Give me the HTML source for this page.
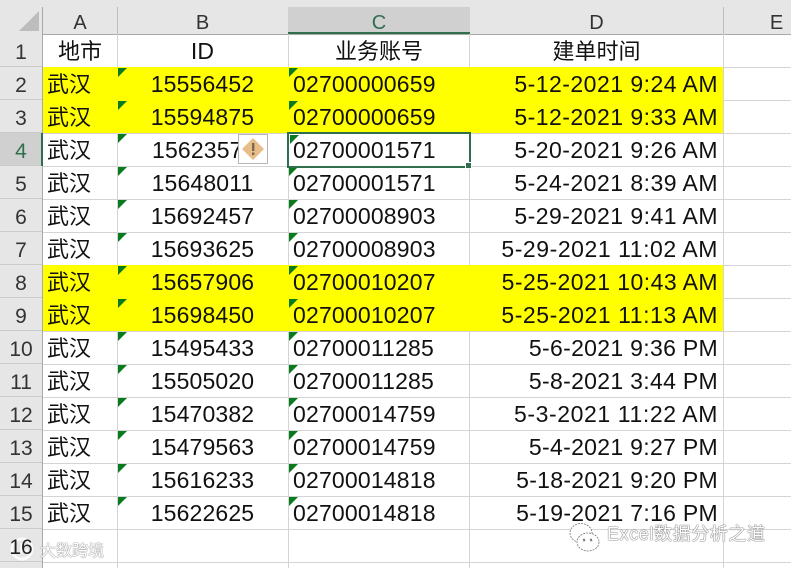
<!DOCTYPE html>
<html><head><meta charset="utf-8">
<style>
html,body{margin:0;padding:0;background:#fff}
#s{position:relative;width:791px;height:568px;overflow:hidden;background:#fff;font-family:"Liberation Sans","Noto Sans CJK SC",sans-serif;color:#111}
#s div{position:absolute;box-sizing:border-box}
.v{top:34px;bottom:0;width:1px;background:#d4d4d4}
.h{left:43px;right:0;height:1px;background:#d4d4d4}
.t{height:33px;line-height:33px;font-size:23px;white-space:nowrap}
.a{left:47px;font-size:22px}
.b{left:117px;width:171px;text-align:center;letter-spacing:.15px}
.c{left:293px;letter-spacing:.18px}
.d{right:73px;text-align:right}
.r{left:0;width:42px;height:33px;line-height:38px;text-align:center;font-size:21px;color:#333;background:#e6e6e6;border-bottom:1px solid #cacaca}
.hd{top:7px;height:27px;line-height:32px;text-align:center;font-size:20px;color:#333}
.tri{width:0;height:0;border-top:9px solid #0a7a1e;border-right:9px solid transparent}
</style></head><body>
<div id="s">
<div style="left:0;top:0;width:791px;height:34px;background:#e6e6e6"></div>
<div style="left:0;top:34px;width:43px;height:534px;background:#e6e6e6"></div>
<div style="left:0;top:34px;width:791px;height:1px;background:#a9a9a9"></div>
<div style="left:42px;top:7px;width:1px;height:561px;background:#a9a9a9"></div>
<svg style="position:absolute;left:0;top:0" width="42" height="34"><polygon points="19,31 39,31 39,11" fill="#bdbdbd"/></svg>
<div style="left:117px;top:7px;width:1px;height:27px;background:#bdbdbd"></div>
<div style="left:723px;top:7px;width:1px;height:27px;background:#bdbdbd"></div>
<div style="left:288px;top:7px;width:182px;height:27px;background:#d0d0d0"></div>
<div style="left:288px;top:32px;width:182px;height:2px;background:#2f6f4d"></div>
<div class="hd" style="left:43px;width:74px">A</div>
<div class="hd" style="left:117px;width:171px">B</div>
<div class="hd" style="left:288px;width:182px;color:#2f6f4d">C</div>
<div class="hd" style="left:470px;width:253px">D</div>
<div class="hd" style="left:724px;width:67px;padding-left:38px;">E</div>

<div class="v" style="left:117px"></div>
<div class="v" style="left:288px"></div>
<div class="v" style="left:469px"></div>
<div class="v" style="left:723px"></div>

<div class="h" style="top:67px"></div>
<div class="h" style="top:100px"></div>
<div class="h" style="top:133px"></div>
<div class="h" style="top:166px"></div>
<div class="h" style="top:199px"></div>
<div class="h" style="top:232px"></div>
<div class="h" style="top:265px"></div>
<div class="h" style="top:298px"></div>
<div class="h" style="top:331px"></div>
<div class="h" style="top:364px"></div>
<div class="h" style="top:397px"></div>
<div class="h" style="top:430px"></div>
<div class="h" style="top:463px"></div>
<div class="h" style="top:496px"></div>
<div class="h" style="top:529px"></div>
<div class="h" style="top:562px"></div>
<div style="left:43px;top:67px;width:680px;height:66px;background:#ff0"></div>
<div style="left:43px;top:265px;width:680px;height:66px;background:#ff0"></div>

<div class="r" style="top:34px">1</div>
<div class="r" style="top:67px">2</div>
<div class="r" style="top:100px">3</div>
<div class="r" style="top:133px;background:#d0d0d0;color:#2f6f4d">4</div>
<div class="r" style="top:166px">5</div>
<div class="r" style="top:199px">6</div>
<div class="r" style="top:232px">7</div>
<div class="r" style="top:265px">8</div>
<div class="r" style="top:298px">9</div>
<div class="r" style="top:331px">10</div>
<div class="r" style="top:364px">11</div>
<div class="r" style="top:397px">12</div>
<div class="r" style="top:430px">13</div>
<div class="r" style="top:463px">14</div>
<div class="r" style="top:496px">15</div>
<div class="r" style="top:529px;color:transparent">16</div>
<div style="left:41px;top:133px;width:2px;height:33px;background:#2f6f4d"></div>

<div class="t" style="left:43px;width:74px;top:35px;text-align:center;font-size:22px">地市</div>
<div class="t b" style="top:35px">ID</div>
<div class="t" style="left:288px;width:182px;top:35px;text-align:center;font-size:22px">业务账号</div>
<div class="t" style="left:470px;width:253px;top:35px;text-align:center;font-size:22px">建单时间</div>

<div class="t a" style="top:68px">武汉</div><div class="t b" style="top:68px">15556452</div><div class="t c" style="top:68px">02700000659</div><div class="t d" style="top:68px;letter-spacing:.47px">5-12-2021 9:24 AM</div>
<div class="t a" style="top:101px">武汉</div><div class="t b" style="top:101px">15594875</div><div class="t c" style="top:101px">02700000659</div><div class="t d" style="top:101px;letter-spacing:.47px">5-12-2021 9:33 AM</div>
<div class="t a" style="top:134px">武汉</div><div class="t b" style="top:134px;left:152px;width:auto">1562357</div><div class="t c" style="top:134px">02700001571</div><div class="t d" style="top:134px;letter-spacing:.47px">5-20-2021 9:26 AM</div>
<div class="t a" style="top:167px">武汉</div><div class="t b" style="top:167px">15648011</div><div class="t c" style="top:167px">02700001571</div><div class="t d" style="top:167px;letter-spacing:.47px">5-24-2021 8:39 AM</div>
<div class="t a" style="top:200px">武汉</div><div class="t b" style="top:200px">15692457</div><div class="t c" style="top:200px">02700008903</div><div class="t d" style="top:200px;letter-spacing:.47px">5-29-2021 9:41 AM</div>
<div class="t a" style="top:233px">武汉</div><div class="t b" style="top:233px">15693625</div><div class="t c" style="top:233px">02700008903</div><div class="t d" style="top:233px;letter-spacing:.55px">5-29-2021 11:02 AM</div>
<div class="t a" style="top:266px">武汉</div><div class="t b" style="top:266px">15657906</div><div class="t c" style="top:266px">02700010207</div><div class="t d" style="top:266px;letter-spacing:.44px">5-25-2021 10:43 AM</div>
<div class="t a" style="top:299px">武汉</div><div class="t b" style="top:299px">15698450</div><div class="t c" style="top:299px">02700010207</div><div class="t d" style="top:299px;letter-spacing:.55px">5-25-2021 11:13 AM</div>
<div class="t a" style="top:332px">武汉</div><div class="t b" style="top:332px">15495433</div><div class="t c" style="top:332px">02700011285</div><div class="t d" style="top:332px;letter-spacing:.31px">5-6-2021 9:36 PM</div>
<div class="t a" style="top:365px">武汉</div><div class="t b" style="top:365px">15505020</div><div class="t c" style="top:365px">02700011285</div><div class="t d" style="top:365px;letter-spacing:.31px">5-8-2021 3:44 PM</div>
<div class="t a" style="top:398px">武汉</div><div class="t b" style="top:398px">15470382</div><div class="t c" style="top:398px">02700014759</div><div class="t d" style="top:398px;letter-spacing:.59px">5-3-2021 11:22 AM</div>
<div class="t a" style="top:431px">武汉</div><div class="t b" style="top:431px">15479563</div><div class="t c" style="top:431px">02700014759</div><div class="t d" style="top:431px;letter-spacing:.31px">5-4-2021 9:27 PM</div>
<div class="t a" style="top:464px">武汉</div><div class="t b" style="top:464px">15616233</div><div class="t c" style="top:464px">02700014818</div><div class="t d" style="top:464px;letter-spacing:.29px">5-18-2021 9:20 PM</div>
<div class="t a" style="top:497px">武汉</div><div class="t b" style="top:497px">15622625</div><div class="t c" style="top:497px">02700014818</div><div class="t d" style="top:497px;letter-spacing:.29px">5-19-2021 7:16 PM</div>

<div class="tri" style="left:118px;top:68px"></div><div class="tri" style="left:289px;top:68px"></div>
<div class="tri" style="left:118px;top:101px"></div><div class="tri" style="left:289px;top:101px"></div>
<div class="tri" style="left:118px;top:134px"></div><div class="tri" style="left:290px;top:135px"></div>
<div class="tri" style="left:118px;top:167px"></div><div class="tri" style="left:289px;top:167px"></div>
<div class="tri" style="left:118px;top:200px"></div><div class="tri" style="left:289px;top:200px"></div>
<div class="tri" style="left:118px;top:233px"></div><div class="tri" style="left:289px;top:233px"></div>
<div class="tri" style="left:118px;top:266px"></div><div class="tri" style="left:289px;top:266px"></div>
<div class="tri" style="left:118px;top:299px"></div><div class="tri" style="left:289px;top:299px"></div>
<div class="tri" style="left:118px;top:332px"></div><div class="tri" style="left:289px;top:332px"></div>
<div class="tri" style="left:118px;top:365px"></div><div class="tri" style="left:289px;top:365px"></div>
<div class="tri" style="left:118px;top:398px"></div><div class="tri" style="left:289px;top:398px"></div>
<div class="tri" style="left:118px;top:431px"></div><div class="tri" style="left:289px;top:431px"></div>
<div class="tri" style="left:118px;top:464px"></div><div class="tri" style="left:289px;top:464px"></div>
<div class="tri" style="left:118px;top:497px"></div><div class="tri" style="left:289px;top:497px"></div>

<div style="left:287px;top:132px;width:184px;height:36px;border:2px solid #2f6f4d"></div>
<div style="left:465px;top:162px;width:7px;height:7px;background:#2f6f4d;border:1px solid #fff"></div>

<div style="left:238px;top:134px;width:30px;height:30px;background:#fff;border:1px solid #b5b5b5"></div>
<svg style="position:absolute;left:238px;top:134px" width="30" height="30"><polygon points="15,4 26,15 15,26 4,15" fill="#e8bd87"/><rect x="14" y="9" width="2.4" height="8" fill="#7a6a55"/><rect x="14" y="18.5" width="2.4" height="2.6" fill="#7a6a55"/></svg>

<svg style="position:absolute;left:8px;top:533px" width="32" height="32" fill="none" stroke="#fff" stroke-opacity=".8" stroke-width="3"><circle cx="14" cy="16" r="10"/><path d="M14 10v8h6"/></svg>
<div class="r" style="top:529px;background:none;border:0;color:#222">16</div>
<div style="left:40px;top:541px;font-size:16px;line-height:22px;color:#fff;text-shadow:0 0 1px #777,0 0 1px #777;white-space:nowrap">大数跨境</div>

<svg style="position:absolute;left:568px;top:520px" width="34" height="38" fill="#fff" stroke="#777" stroke-width=".8" stroke-dasharray="2 1"><ellipse cx="13" cy="13" rx="11" ry="9.5"/><ellipse cx="20" cy="22" rx="11" ry="9"/><circle cx="16" cy="20" r="1" fill="#777"/><circle cx="23" cy="20" r="1" fill="#777"/></svg>
<div style="left:607px;top:521px;font-size:18px;line-height:26px;letter-spacing:.6px;color:#fff;text-shadow:0 0 1px #444,0 0 1px #444;white-space:nowrap">Excel数据分析之道</div>
</div>
</body></html>
